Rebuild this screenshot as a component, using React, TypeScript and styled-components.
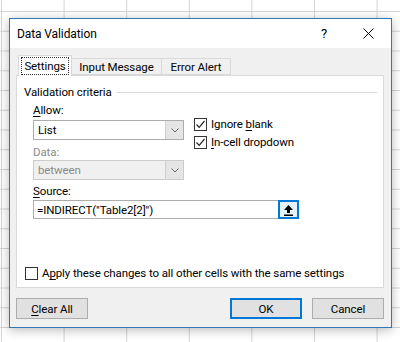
import styled, { createGlobalStyle } from "styled-components";

const GlobalStyle = createGlobalStyle`
  html, body {
    margin: 0;
    padding: 0;
    width: 400px;
    height: 342px;
    overflow: hidden;
  }
  body {
    font-family: Roboto, "Liberation Sans", sans-serif;
    font-size: 11.5px;
    letter-spacing: -0.1px;
    color: #000;
  }
`;

const Sheet = styled.div`
  width: 400px;
  height: 342px;
  box-sizing: border-box;
  padding: 18px 0 0 9px;
  background-color: #fff;
  background-image: linear-gradient(to right, #d4d4d4 1px, transparent 1px),
    linear-gradient(to bottom, #d4d4d4 1px, transparent 1px);
  background-size: 62.6px 19.75px;
  background-position: 1px 11px;
`;

const Dialog = styled.div`
  width: 383px;
  height: 310px;
  box-sizing: border-box;
  border: 1px solid #2f78b8;
  background: #f0f0f0;
  box-shadow: 0 2px 10px rgba(0, 0, 0, 0.28);
  display: flex;
  flex-direction: column;
`;

const TitleBar = styled.div`
  height: 29px;
  background: #fff;
  display: flex;
  align-items: center;
  padding-left: 7px;
`;

const Title = styled.div`
  flex: 1;
  font-size: 12px;
  line-height: 16px;
`;

const CaptionButton = styled.div<{ $w: number }>`
  width: ${(p) => p.$w}px;
  height: 29px;
  display: flex;
  align-items: center;
  justify-content: center;
  font-size: 13px;
`;

const Body = styled.div`
  flex: 1;
  display: flex;
  flex-direction: column;
  padding: 7px 7px 7px 6px;
`;

const TabRow = styled.div`
  display: flex;
  align-items: flex-end;
  height: 20px;
  padding-left: 2px;
  position: relative;
  z-index: 1;
`;

const Tab = styled.div<{ $w: number; $active?: boolean }>`
  width: ${(p) => p.$w}px;
  height: ${(p) => (p.$active ? 21 : 17)}px;
  box-sizing: border-box;
  border: 1px solid #d9d9d9;
  border-left: ${(p) => (p.$active ? "1px solid #d9d9d9" : "none")};
  border-bottom: ${(p) => (p.$active ? "none" : "1px solid #d9d9d9")};
  background: ${(p) => (p.$active ? "#fff" : "#f0f0f0")};
  margin-bottom: ${(p) => (p.$active ? -1 : 0)}px;
  display: flex;
  align-items: ${(p) => (p.$active ? "flex-start" : "center")};
  justify-content: center;
  padding-top: ${(p) => (p.$active ? 3 : 0)}px;
  line-height: 14px;
  white-space: nowrap;
`;

const FocusText = styled.span`
  outline: 1px dotted #333;
  outline-offset: 1px;
  padding: 0 1px;
`;

const Panel = styled.div`
  height: 213px;
  box-sizing: border-box;
  background: #fff;
  border: 1px solid #d9d9d9;
  display: flex;
  flex-direction: column;
  padding: 9px 6px 5px 7px;
`;

const Legend = styled.div`
  display: flex;
  align-items: center;
  height: 14px;
  line-height: 14px;
`;

const LegendLine = styled.div`
  flex: 1;
  height: 1px;
  background: #dcdcdc;
  margin-left: 5px;
`;

const Criteria = styled.div`
  padding-left: 9px;
  display: flex;
  flex-direction: column;
`;

const Upper = styled.div`
  display: flex;
`;

const LeftCol = styled.div`
  width: 151px;
  display: flex;
  flex-direction: column;
`;

const RightCol = styled.div`
  margin-left: 10px;
  padding-top: 16px;
  display: flex;
  flex-direction: column;
`;

const Label = styled.div<{ $top: number; $disabled?: boolean }>`
  margin-top: ${(p) => p.$top}px;
  height: 14px;
  line-height: 14px;
  color: ${(p) => (p.$disabled ? "#8a8a8a" : "#000")};
`;

const Select = styled.div<{ $top: number; $disabled?: boolean }>`
  margin-top: ${(p) => p.$top}px;
  height: 20px;
  box-sizing: border-box;
  border: 1px solid ${(p) => (p.$disabled ? "#cccccc" : "#adadad")};
  background: ${(p) => (p.$disabled ? "#f0f0f0" : "#fff")};
  color: ${(p) => (p.$disabled ? "#8a8a8a" : "#000")};
  display: flex;
  align-items: center;
`;

const SelectText = styled.div`
  flex: 1;
  padding-left: 4px;
  line-height: 14px;
`;

const Arrow = styled.div`
  width: 17px;
  height: 18px;
  background: #e5e5e5;
  border-left: 1px solid #d0d0d0;
  display: flex;
  align-items: center;
  justify-content: center;
`;

const CheckRow = styled.div`
  height: 18px;
  display: flex;
  align-items: center;
  line-height: 14px;
  white-space: nowrap;
`;

const Box = styled.div`
  width: 13px;
  height: 13px;
  box-sizing: border-box;
  border: 1px solid #333;
  background: #fff;
  margin-right: 4px;
  display: flex;
  align-items: center;
  justify-content: center;
  flex-shrink: 0;
`;

const SourceRow = styled.div`
  margin-top: 2px;
  width: 266px;
  height: 19px;
  display: flex;
`;

const SourceInput = styled.div`
  flex: 1;
  box-sizing: border-box;
  border: 1px solid #adadad;
  border-right: none;
  display: flex;
  align-items: center;
  padding-left: 3px;
  line-height: 14px;
`;

const RefButton = styled.div`
  width: 21px;
  box-sizing: border-box;
  border: 2px solid #0078d7;
  background: #e5f1fb;
  display: flex;
  align-items: center;
  justify-content: center;
`;

const ApplyRow = styled(CheckRow)`
  margin-top: auto;
  padding-left: 1px;
`;

const Buttons = styled.div`
  margin-top: 10px;
  display: flex;
  justify-content: space-between;
`;

const ButtonGroup = styled.div`
  display: flex;
  gap: 10px;
`;

const Button = styled.div<{ $default?: boolean }>`
  width: 72px;
  height: 21px;
  box-sizing: border-box;
  border: ${(p) => (p.$default ? "2px solid #0078d7" : "1px solid #adadad")};
  background: #e1e1e1;
  display: flex;
  align-items: center;
  justify-content: center;
  line-height: 14px;
`;

const U = styled.span`
  text-decoration: underline;
  text-underline-offset: 2px;
`;

const Chevron = () => (
  <svg width="8" height="5" viewBox="0 0 8 5">
    <path d="M0.5 0.5 L4 4 L7.5 0.5" fill="none" stroke="#6a6a6a" strokeWidth="1" />
  </svg>
);

const Check = () => (
  <svg width="11" height="11" viewBox="0 0 11 11">
    <path d="M1.5 5.5 L4.2 8.3 L9.5 2" fill="none" stroke="#222" strokeWidth="1.2" />
  </svg>
);

const CloseIcon = () => (
  <svg width="11" height="11" viewBox="0 0 11 11">
    <path d="M0.5 0.5 L10.5 10.5 M10.5 0.5 L0.5 10.5" stroke="#000" strokeWidth="1" />
  </svg>
);

const RefIcon = () => (
  <svg width="11" height="12" viewBox="0 0 11 12">
    <path d="M5.5 1 L10 6 L7 6 L7 9 L4 9 L4 6 L1 6 Z" fill="#000" />
    <rect x="1" y="10.5" width="9" height="1.5" fill="#000" />
  </svg>
);

export default function App() {
  return (
    <>
      <GlobalStyle />
      <Sheet>
        <Dialog>
          <TitleBar>
            <Title>Data Validation</Title>
            <CaptionButton $w={42}>?</CaptionButton>
            <CaptionButton $w={46}>
              <CloseIcon />
            </CaptionButton>
          </TitleBar>
          <Body>
            <TabRow>
              <Tab $w={54} $active>
                <FocusText>Settings</FocusText>
              </Tab>
              <Tab $w={90}>Input Message</Tab>
              <Tab $w={69}>Error Alert</Tab>
            </TabRow>
            <Panel>
              <Legend>
                <span>Validation criteria</span>
                <LegendLine />
              </Legend>
              <Criteria>
                <Upper>
                  <LeftCol>
                    <Label $top={4}>
                      <U>A</U>llow:
                    </Label>
                    <Select $top={3}>
                      <SelectText>List</SelectText>
                      <Arrow>
                        <Chevron />
                      </Arrow>
                    </Select>
                    <Label $top={5} $disabled>
                      Data:
                    </Label>
                    <Select $top={1} $disabled>
                      <SelectText>between</SelectText>
                      <Arrow>
                        <Chevron />
                      </Arrow>
                    </Select>
                  </LeftCol>
                  <RightCol>
                    <CheckRow>
                      <Box>
                        <Check />
                      </Box>
                      <span>
                        Ignore <U>b</U>lank
                      </span>
                    </CheckRow>
                    <CheckRow>
                      <Box>
                        <Check />
                      </Box>
                      <span>
                        <U>I</U>n-cell dropdown
                      </span>
                    </CheckRow>
                  </RightCol>
                </Upper>
                <Label $top={4}>
                  <U>S</U>ource:
                </Label>
                <SourceRow>
                  <SourceInput>=INDIRECT("Table2[2]")</SourceInput>
                  <RefButton>
                    <RefIcon />
                  </RefButton>
                </SourceRow>
              </Criteria>
              <ApplyRow>
                <Box />
                <span>
                  A<U>p</U>ply these changes to all other cells with the same settings
                </span>
              </ApplyRow>
            </Panel>
            <Buttons>
              <Button>
                <span>
                  <U>C</U>lear All
                </span>
              </Button>
              <ButtonGroup>
                <Button $default>OK</Button>
                <Button>Cancel</Button>
              </ButtonGroup>
            </Buttons>
          </Body>
        </Dialog>
      </Sheet>
    </>
  );
}
